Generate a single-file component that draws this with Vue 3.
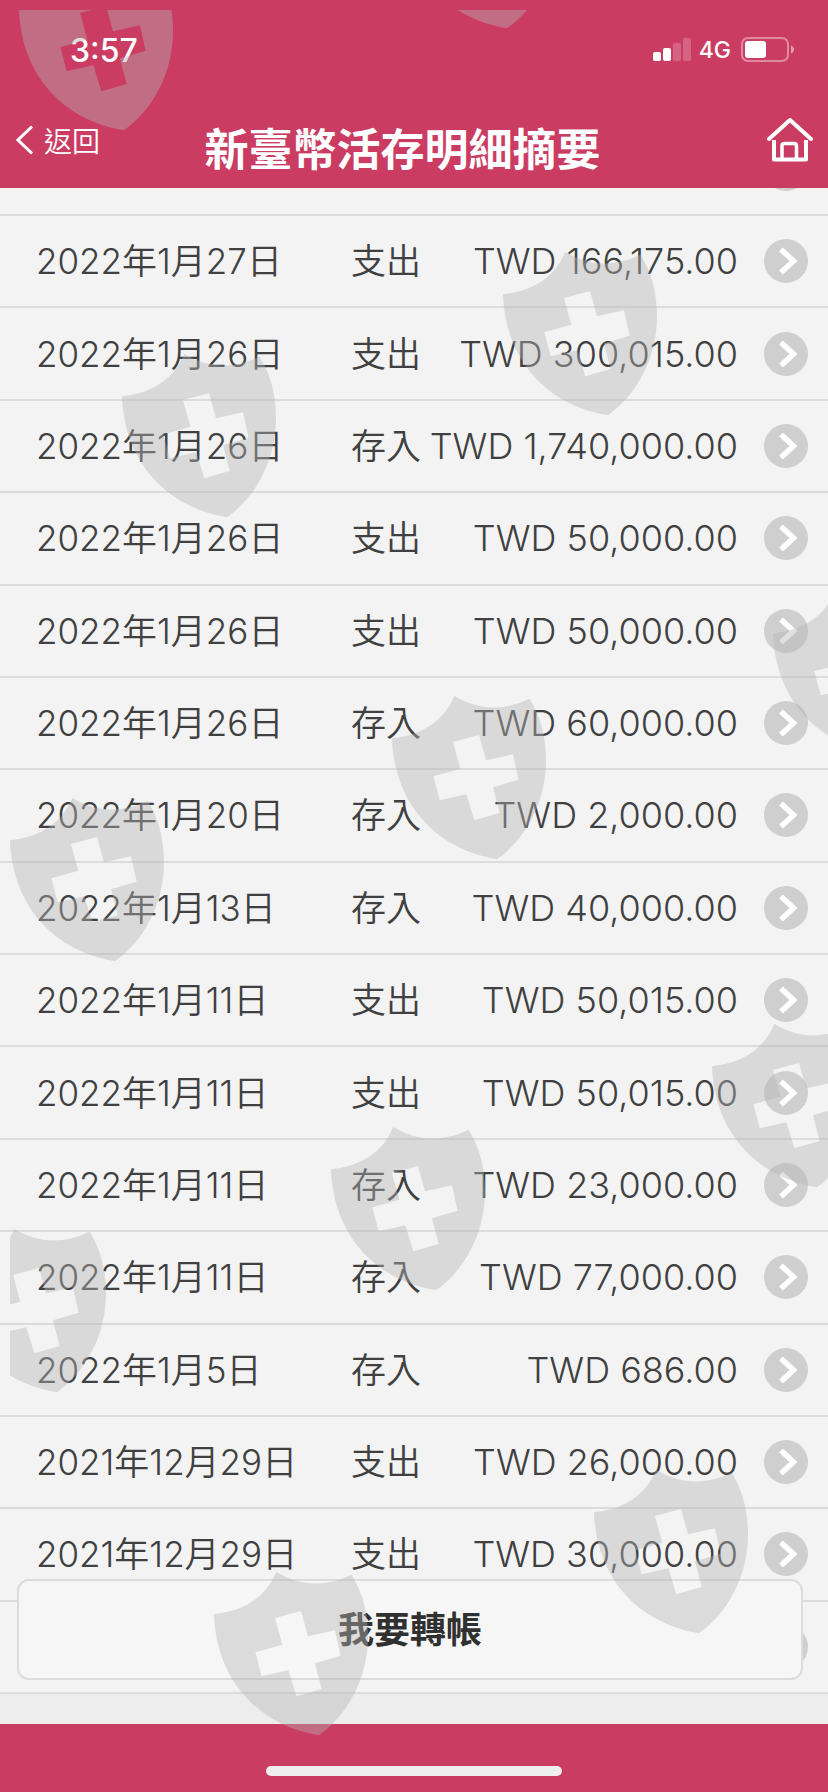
<script setup>
const transactions = [
  { date: '2022年1月27日', type: '支出', amount: 'TWD 166,175.00' },
  { date: '2022年1月26日', type: '支出', amount: 'TWD 300,015.00' },
  { date: '2022年1月26日', type: '存入', amount: 'TWD 1,740,000.00' },
  { date: '2022年1月26日', type: '支出', amount: 'TWD 50,000.00' },
  { date: '2022年1月26日', type: '支出', amount: 'TWD 50,000.00' },
  { date: '2022年1月26日', type: '存入', amount: 'TWD 60,000.00' },
  { date: '2022年1月20日', type: '存入', amount: 'TWD 2,000.00' },
  { date: '2022年1月13日', type: '存入', amount: 'TWD 40,000.00' },
  { date: '2022年1月11日', type: '支出', amount: 'TWD 50,015.00' },
  { date: '2022年1月11日', type: '支出', amount: 'TWD 50,015.00' },
  { date: '2022年1月11日', type: '存入', amount: 'TWD 23,000.00' },
  { date: '2022年1月11日', type: '存入', amount: 'TWD 77,000.00' },
  { date: '2022年1月5日', type: '存入', amount: 'TWD 686.00' },
  { date: '2021年12月29日', type: '支出', amount: 'TWD 26,000.00' },
  { date: '2021年12月29日', type: '支出', amount: 'TWD 30,000.00' },
  { date: '', type: '', amount: '' },
]

// Top-left corner of every shield, relative to the watermark layer.
const shields = [
  [9, -43], [392, -145], [493, 242], [112, 344], [382, 686], [763, 581],
  [702, 1014], [0, 788], [-58, 1219], [321, 1117], [204, 1562], [584, 1460],
]
</script>

<template>
  <div class="screen">
    <header class="header">
      <div class="status">
        <span class="time">3:57</span>
        <div class="indicators">
          <svg class="signal" width="38" height="24" viewBox="0 0 38 24" aria-hidden="true">
            <rect x="0" y="14" width="8" height="9" rx="2" fill="#fff" />
            <rect x="10" y="10" width="8" height="13" rx="2" fill="#fff" />
            <rect x="20" y="5" width="8" height="18" rx="2" fill="#fff" opacity=".2" />
            <rect x="30" y="0" width="8" height="23" rx="2" fill="#fff" opacity=".2" />
          </svg>
          <span class="network">4G</span>
          <svg width="53" height="26" viewBox="0 0 53 26" aria-hidden="true">
            <rect x="1" y="1" width="46" height="23" rx="6" fill="none" stroke="#fff" stroke-width="2" opacity=".4" />
            <rect x="4" y="4" width="21" height="17" rx="3" fill="#fff" />
            <path d="M50 8.500C54 10 54 15 50 16.500Z" fill="#fff" opacity=".5" />
          </svg>
        </div>
      </div>
      <nav class="bar">
        <button class="back" type="button">
          <svg width="18" height="30" viewBox="0 0 18 30" aria-hidden="true">
            <path d="M16 1.500L2 15L16 28.500" fill="none" stroke="#fff" stroke-width="3" />
          </svg>
          <span>返回</span>
        </button>
        <h1 class="title">新臺幣活存明細摘要</h1>
        <button class="home" type="button" aria-label="首頁">
          <svg width="46" height="44" viewBox="0 0 46 44" fill="none" stroke="#fff" stroke-linecap="round" stroke-linejoin="round" aria-hidden="true">
            <path d="M2 21L23 2L44 21" stroke-width="4" />
            <path d="M7 22V41.500H39V22" stroke-width="4" stroke-linecap="butt" />
            <path d="M15 41V28Q15 25.500 17.500 25.500H27Q29.500 25.500 29.500 28V41" stroke-width="3.500" />
          </svg>
        </button>
      </nav>
    </header>

    <main class="content">
      <div class="previous"><span class="disc"></span></div>
      <ul class="list">
        <li v-for="(item, index) in transactions" :key="index" class="item">
          <a class="link" href="#">
            <span>{{ item.date }}</span>
            <span>{{ item.type }}</span>
            <span class="amount">{{ item.amount }}</span>
            <svg class="arrow" width="44" height="44" viewBox="0 0 44 44" aria-hidden="true">
              <circle cx="22" cy="22" r="22" fill="#cfcfcf" />
              <path d="M17 10.500L29.500 22L17 33.500" fill="none" stroke="#fff" stroke-width="5.500" />
            </svg>
          </a>
        </li>
      </ul>
      <button class="transfer" type="button">我要轉帳</button>
    </main>

    <footer class="footer"><span class="handle"></span></footer>

    <div class="watermark" aria-hidden="true">
      <svg width="100%" height="100%">
        <defs>
          <path
            id="shield"
            transform="scale(.3333)"
            fill-rule="evenodd"
            d="M0 127Q140 112 187 0Q295 65 413 8C445 60 462 120 462 193C462 320 400 430 315 490C110 455 5 300 0 127Z
               M183 138L261 117L282 193L363 175L380 251L303 274L323 351L247 373L223 295L143 313L124 241L205 218Z"
          />
        </defs>
        <use v-for="([x, y], index) in shields" :key="index" href="#shield" :x="x" :y="y" />
      </svg>
    </div>
  </div>
</template>

<style>
body {
  margin: 0;
}
</style>

<style scoped>
.screen {
  position: relative;
  display: flex;
  flex-direction: column;
  min-height: 100vh;
  overflow: hidden;
  background: #ededed;
  color: #404040;
  font-family: Inter, "Noto Sans CJK TC", sans-serif;
}

button {
  padding: 0;
  border: 0;
  background: none;
  color: inherit;
  font: inherit;
}

.header {
  display: flex;
  flex-direction: column;
  box-sizing: border-box;
  height: 188px;
  background: #cb3c63;
  color: #fff;
}

.status {
  display: flex;
  align-items: center;
  justify-content: space-between;
  height: 100px;
  padding: 0 34px 0 70px;
}

.time {
  font-size: 32px;
  font-weight: 500;
}

.indicators {
  display: flex;
  align-items: center;
}

.network {
  margin: 0 10px 0 8px;
  font-size: 23px;
  font-weight: 500;
}

.bar {
  display: grid;
  grid-template-columns: 1fr auto 1fr;
  align-items: center;
  height: 80px;
  padding: 0 15px 0 16px;
}

.back {
  display: flex;
  align-items: center;
  gap: 10px;
  font-size: 28px;
  font-weight: 350;
}

.title {
  margin: 20px 24px 0 0;
  font-size: 44px;
  line-height: 60px;
  font-weight: 600;
  white-space: nowrap;
}

.home {
  display: flex;
  justify-self: end;
}

.content {
  position: relative;
  display: flex;
  flex: 1;
  flex-direction: column;
  padding-bottom: 30px;
}

.previous {
  display: flex;
  align-items: flex-end;
  justify-content: flex-end;
  box-sizing: border-box;
  height: 28px;
  padding: 0 20px 23px 0;
  overflow: hidden;
  border-bottom: 2px solid #dcdcdc;
  background: #f3f3f3;
}

.disc {
  flex: none;
  width: 44px;
  height: 44px;
  border-radius: 50%;
  background: #cfcfcf;
}

.list {
  display: flex;
  flex: 1;
  flex-direction: column;
  margin: 0;
  padding: 0;
  background: #f3f3f3;
  list-style: none;
}

.item {
  display: flex;
  flex: 1 0 92px;
  box-sizing: border-box;
  border-bottom: 2px solid #dcdcdc;
}

.link {
  display: grid;
  flex: 1;
  grid-template-columns: 315px 70px 1fr 70px;
  align-items: center;
  padding: 0 20px 0 36px;
  color: inherit;
  font-size: 35px;
  font-weight: 350;
  line-height: 48px;
  text-decoration: none;
  white-space: nowrap;
}

.amount {
  font-size: 36px;
  text-align: right;
}

.arrow {
  justify-self: end;
}

.transfer {
  position: absolute;
  right: 25px;
  bottom: 44px;
  left: 17px;
  height: 101px;
  padding-bottom: 6px;
  border: 2px solid #dcdcdc;
  border-radius: 12px;
  background: #f6f6f6;
  color: #303030;
  font-size: 36px;
  font-weight: 600;
}

.footer {
  display: flex;
  align-items: flex-end;
  justify-content: center;
  box-sizing: border-box;
  height: 68px;
  padding-bottom: 16px;
  background: #cb3c63;
}

.handle {
  width: 296px;
  height: 10px;
  border-radius: 5px;
  background: #efefef;
}

.watermark {
  position: absolute;
  inset: 10px 0 0 10px;
  overflow: hidden;
  color: #b5b5b5;
  opacity: .41;
  pointer-events: none;
}

.watermark svg {
  display: block;
  fill: currentColor;
}
</style>
